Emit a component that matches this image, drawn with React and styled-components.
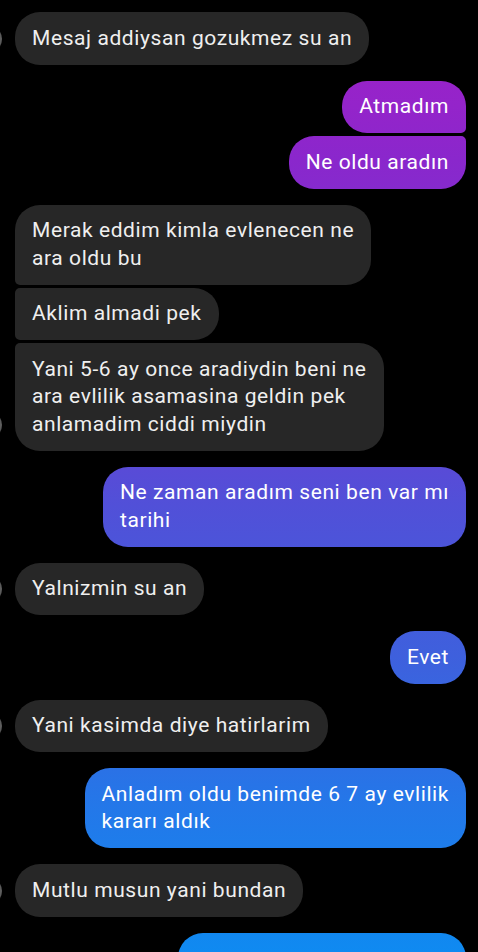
import styled, { createGlobalStyle, css } from "styled-components";

const GlobalStyle = createGlobalStyle`
  * {
    box-sizing: border-box;
  }
  html, body {
    margin: 0;
    padding: 0;
    background: #000000;
  }
  body {
    font-family: Roboto, "Noto Sans", "Liberation Sans", sans-serif;
    -webkit-font-smoothing: antialiased;
  }
`;

const conversation = [
  { from: "in", lines: [["Mesaj addiysan gozukmez su an"]] },
  { from: "out", lines: [["Atmadım"], ["Ne oldu aradın"]] },
  {
    from: "in",
    lines: [
      ["Merak eddim kimla evlenecen ne", "ara oldu bu"],
      ["Aklim almadi pek"],
      [
        "Yani 5-6 ay once aradiydin beni ne",
        "ara evlilik asamasina geldin pek",
        "anlamadim ciddi miydin",
      ],
    ],
  },
  { from: "out", lines: [["Ne zaman aradım seni ben var mı", "tarihi"]] },
  { from: "in", lines: [["Yalnizmin su an"]] },
  { from: "out", lines: [["Evet"]] },
  { from: "in", lines: [["Yani kasimda diye hatirlarim"]] },
  { from: "out", lines: [["Anladım oldu benimde 6 7 ay evlilik", "kararı aldık"]] },
  { from: "in", lines: [["Mutlu musun yani bundan"]] },
  { from: "out", lines: [null], cutWidth: 288 },
];

const BIG = "25px";
const SMALL = "5px";

export default function App() {
  return (
    <>
      <GlobalStyle />
      <Thread>
        {conversation.map((group, gi) => (
          <Group key={gi} $out={group.from === "out"}>
            {group.lines.map((text, i) => {
              const count = group.lines.length;
              const isFirst = i === 0;
              const isLast = i === count - 1;
              return (
                <Row key={i}>
                  {group.from === "in" && isLast && <Avatar />}
                  <Bubble
                    $out={group.from === "out"}
                    $topSmall={count > 1 && !isFirst}
                    $bottomSmall={count > 1 && !isLast}
                    $width={text ? null : group.cutWidth}
                  >
                    {text
                      ? text.map((line, li) => <Line key={li}>{line}</Line>)
                      : null}
                  </Bubble>
                </Row>
              );
            })}
          </Group>
        ))}
      </Thread>
    </>
  );
}

const Thread = styled.div`
  height: 952px;
  overflow: hidden;
  display: flex;
  flex-direction: column;
  gap: 16px;
  padding: 12px 12px 0 15px;
`;

const Group = styled.div`
  display: flex;
  flex-direction: column;
  gap: 3px;
  align-items: ${(p) => (p.$out ? "flex-end" : "flex-start")};
`;

const Row = styled.div`
  position: relative;
  display: flex;
`;

const Avatar = styled.div`
  position: absolute;
  left: -41px;
  bottom: 12px;
  width: 28px;
  height: 28px;
  border-radius: 50%;
  background: radial-gradient(circle at 80% 50%, #6e6e6e 0%, #3a3a3a 55%, #1e1e1e 100%);
`;

const Bubble = styled.div`
  padding: 12.5px 17px;
  min-height: 52.5px;
  font-size: 21px;
  letter-spacing: 0.58px;
  line-height: 27.5px;
  white-space: nowrap;
  ${(p) => p.$width && `width: ${p.$width}px;`}
  ${(p) =>
    p.$out
      ? css`
          color: #ffffff;
          background: linear-gradient(
            to bottom,
            #a11fc7 0px,
            #9424ca 105px,
            #8a27cc 160px,
            #6a3fd4 380px,
            #5150d8 505px,
            #3e60dd 657px,
            #2378e9 810px,
            #0f8af1 952px
          );
          background-attachment: fixed;
          border-top-right-radius: ${p.$topSmall ? SMALL : BIG};
          border-bottom-right-radius: ${p.$bottomSmall ? SMALL : BIG};
          border-top-left-radius: ${BIG};
          border-bottom-left-radius: ${BIG};
        `
      : css`
          color: #efefef;
          background: #272727;
          border-top-left-radius: ${p.$topSmall ? SMALL : BIG};
          border-bottom-left-radius: ${p.$bottomSmall ? SMALL : BIG};
          border-top-right-radius: ${BIG};
          border-bottom-right-radius: ${BIG};
        `}
`;

const Line = styled.span`
  display: block;
`;
